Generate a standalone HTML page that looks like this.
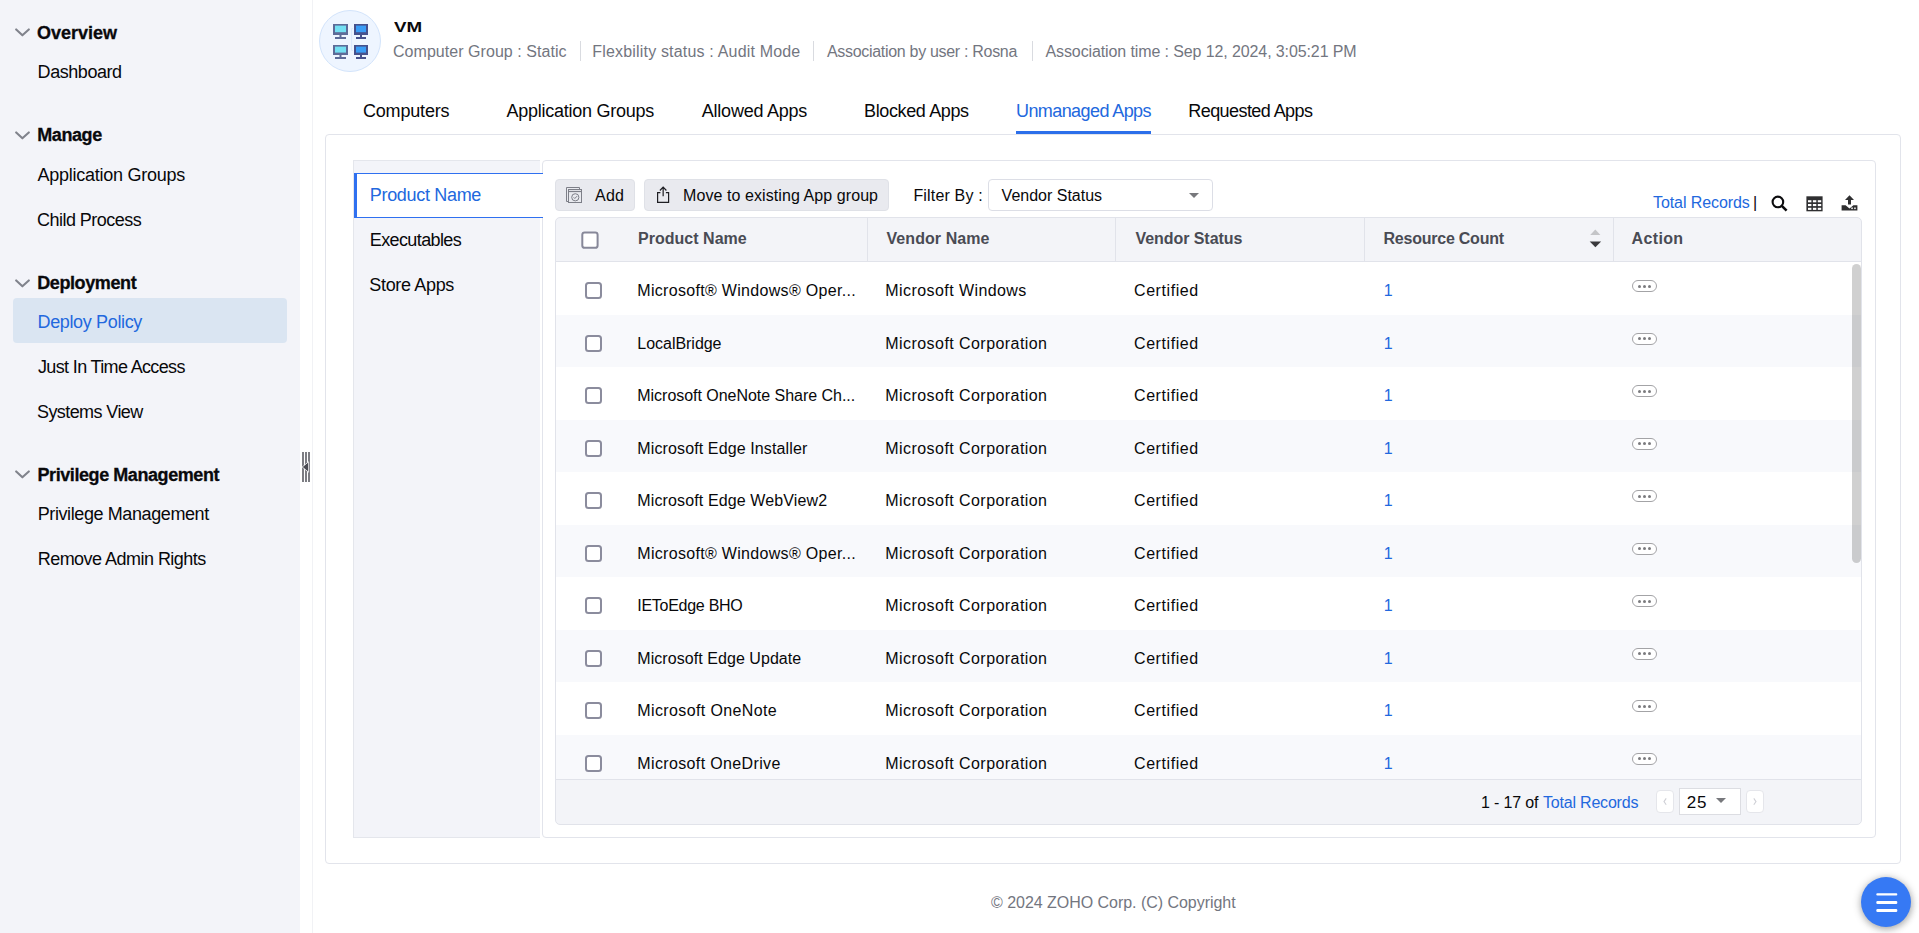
<!DOCTYPE html>
<html lang="en">
<head>
<meta charset="utf-8">
<title>Deploy Policy - Unmanaged Apps</title>
<style>
*{box-sizing:border-box;margin:0;padding:0}
html,body{width:1919px;height:933px;overflow:hidden;background:#fff}
body{position:relative;font-family:"Liberation Sans",sans-serif;color:#08080a}
.a{position:absolute}
.t{position:absolute;white-space:pre;line-height:24px;height:24px}
#side{left:0;top:0;width:300px;height:933px;background:#f3f4f9}
#sel{left:13px;top:298px;width:274px;height:45px;background:#dae5f2;border-radius:4px}
.chev{left:15px;width:15px;height:9px}
#vline{left:312px;top:0;width:1px;height:933px;background:#f1f2f5}
#avatar{left:319px;top:10px;width:62px;height:62px;border-radius:50%;background:#eef5ff;border:1px solid #d3e4fb}
.sep{top:41px;width:1.5px;height:19.5px;background:#d9dbe0}
#uline{left:1016px;top:131px;width:135px;height:3px;background:#2c6fea}
#outer{left:325px;top:134px;width:1576px;height:730px;border:1px solid #e2e4eb;border-radius:4px;background:#fff}
#lpanel{left:353px;top:160px;width:187px;height:678px;background:#f3f4f9;border:1px solid #e4e6ec;border-right:0}
#cpanel{left:542px;top:160px;width:1334px;height:678px;background:#fff;border:1px solid #e2e4eb;border-radius:4px}
#ltab{left:354px;top:173px;width:189px;height:45px;background:#fff;border-left:3px solid #2f70f0;border-top:1px solid #2f70f0;border-bottom:1px solid #2f70f0}
.btn{top:179px;height:32px;background:#e9eaef;border:1px solid #dfe1e7;border-radius:4px}
#selbox{left:988px;top:179px;width:225px;height:32px;background:#fff;border:1px solid #dcdee6;border-radius:4px}
.tri{width:0;height:0;border-left:5.3px solid transparent;border-right:5.3px solid transparent;border-top:5.6px solid #77787c}
#thead{left:555px;top:217px;width:1307px;height:45px;background:#f3f4f8;border:1px solid #e1e3ea;border-radius:5px 5px 0 0}
.csep{top:218px;width:1px;height:43px;background:#e1e3ea}
.row{position:absolute;left:556px;width:1305px;height:52.5px;background:#fff}
.row.alt{background:#f8f9fc}
.cb{position:absolute;width:17px;height:17px;border:2px solid #8b8c9d;border-radius:3.5px;background:#fff}
.pill{position:absolute;width:25px;height:12.2px;border:1.5px solid #a3a3a6;border-radius:7px;background:#fff;display:flex;align-items:center;justify-content:center;gap:1.6px}
.pill i{display:block;width:3.2px;height:3.2px;border-radius:50%;background:#7b7b7e}
#tleft{left:555px;top:261px;width:1px;height:520px;background:#e1e3ea}
#tright{left:1861px;top:261px;width:1px;height:520px;background:#e1e3ea}
#sbar{left:1852px;top:264px;width:9px;height:299px;border-radius:5px;background:rgba(0,0,0,.185)}
#tfoot{left:555px;top:779px;width:1307px;height:45.5px;background:#f3f4f8;border:1px solid #e1e3ea;border-radius:0 0 5px 5px}
.pg{top:790px;width:18px;height:23px;background:#fff;border:1px solid #e5e6eb;border-radius:4px}
#pgsel{left:1679px;top:788px;width:62px;height:27px;background:#fff;border:1px solid #dcdde2}
#fab{left:1861px;top:877px;width:50px;height:50px;border-radius:50%;background:#3679f4;box-shadow:0 1px 8px rgba(0,0,0,.3),1px 3px 6px rgba(0,0,0,.12)}
#fab b{position:absolute;left:15.3px;width:21px;height:2.3px;background:#fff;border-radius:1.2px}
</style>
</head>
<body>
<!-- ================= sidebar ================= -->
<div id="side" class="a"></div>
<div id="sel" class="a"></div>
<svg class="a chev" style="top:28px" viewBox="0 0 15 9"><path d="M1.2 1.4 L7.4 7.3 L13.8 1.4" fill="none" stroke="#80838c" stroke-width="2.1" stroke-linecap="round" stroke-linejoin="round"/></svg>
<svg class="a chev" style="top:130.5px" viewBox="0 0 15 9"><path d="M1.2 1.4 L7.4 7.3 L13.8 1.4" fill="none" stroke="#80838c" stroke-width="2.1" stroke-linecap="round" stroke-linejoin="round"/></svg>
<svg class="a chev" style="top:278.5px" viewBox="0 0 15 9"><path d="M1.2 1.4 L7.4 7.3 L13.8 1.4" fill="none" stroke="#80838c" stroke-width="2.1" stroke-linecap="round" stroke-linejoin="round"/></svg>
<svg class="a chev" style="top:470px" viewBox="0 0 15 9"><path d="M1.2 1.4 L7.4 7.3 L13.8 1.4" fill="none" stroke="#80838c" stroke-width="2.1" stroke-linecap="round" stroke-linejoin="round"/></svg>
<!-- collapse handle -->
<svg class="a" style="left:301px;top:451px" width="10" height="32" viewBox="0 0 10 32">
 <g stroke="#4c4d54" stroke-width="1.45" fill="none"><path d="M2 1V31M5 1V31M8 1V31"/></g>
 <path d="M1.2 16 L7.6 10.8 V21.2Z" fill="#4c4d54" stroke="#fff" stroke-width=".8"/>
</svg>
<div id="vline" class="a"></div>

<!-- ================= header ================= -->
<div id="avatar" class="a"></div>
<svg class="a" style="left:332px;top:23px" width="38" height="38" viewBox="0 0 38 38">
 <path d="M21 5.6H19.6V27.4H21" fill="none" stroke="#dbe8fc" stroke-width="1"/>
 <g>
  <rect x="1" y="1" width="15" height="11" fill="#5d6b98"/><rect x="3" y="2.6" width="11" height="6.6" fill="#74e0f3"/>
  <rect x="7.5" y="12" width="2" height="2.4" fill="#5d6b98"/><rect x="3" y="14" width="11" height="2" fill="#5d6b98"/>
  <rect x="22" y="1" width="14" height="11" fill="#46518c"/><rect x="24" y="2.6" width="10" height="6.6" fill="#3a9df6"/>
  <rect x="28" y="12" width="2" height="2.4" fill="#46518c"/><rect x="24" y="14" width="10" height="2" fill="#46518c"/>
  <rect x="1" y="22" width="15" height="10" fill="#5d6b98"/><rect x="3" y="23.6" width="11" height="6" fill="#74e0f3"/>
  <rect x="7.5" y="32" width="2" height="2.4" fill="#5d6b98"/><rect x="3" y="34" width="11" height="2" fill="#5d6b98"/>
  <rect x="22" y="22" width="14" height="10" fill="#46518c"/><rect x="24" y="23.6" width="10" height="6" fill="#3a9df6"/>
  <rect x="28" y="32" width="2" height="2.4" fill="#46518c"/><rect x="24" y="34" width="10" height="2" fill="#46518c"/>
 </g>
</svg>
<div class="a sep" style="left:579.5px"></div>
<div class="a sep" style="left:812.5px"></div>
<div class="a sep" style="left:1031.5px"></div>

<!-- ================= panels ================= -->
<div id="outer" class="a"></div>
<div id="uline" class="a"></div>
<div id="lpanel" class="a"></div>
<div id="cpanel" class="a"></div>
<div id="ltab" class="a"></div>

<!-- toolbar -->
<div class="a btn" style="left:555px;width:80px"></div>
<div class="a btn" style="left:644px;width:245px"></div>
<svg class="a" style="left:565px;top:186px" width="18" height="18" viewBox="0 0 18 18" fill="none" stroke="#7d7f88" stroke-width="1">
 <path d="M3.5 15.5H1.5V1.5H14.5V3.5"/>
 <rect x="3.5" y="3.5" width="13" height="13"/>
 <path d="M3.5 5.5H16.5" stroke-width="1.2"/>
 <circle cx="10.3" cy="11.3" r="3.6"/>
 <path d="M8.6 11.3 L9.8 12.5 L12.1 10.1"/>
</svg>
<svg class="a" style="left:655px;top:186px" width="16" height="18" viewBox="0 0 16 18" fill="none" stroke="#1e1e23" stroke-width="1.2">
 <path d="M5.4 6.6H2.6V16.4H13.6V6.6H10.9"/>
 <path d="M8.15 10.2V1.6M4.9 4.5L8.15 1.2L11.4 4.5"/>
</svg>
<div id="selbox" class="a"></div>
<div class="a tri" style="left:1188.5px;top:192.5px"></div>
<!-- search / columns / export icons -->
<svg class="a" style="left:1771px;top:195px" width="17" height="17" viewBox="0 0 17 17" fill="none" stroke="#0c0c0e" stroke-width="2.1">
 <circle cx="6.9" cy="6.9" r="5.3"/><path d="M10.8 10.8L15.6 15.6" stroke-width="2.6"/>
</svg>
<svg class="a" style="left:1806px;top:195.6px" width="17" height="16" viewBox="0 0 17 16">
 <rect x=".4" y=".3" width="16.2" height="15" fill="#2f2f31"/>
 <g fill="#fff">
  <rect x="2" y="4.2" width="3.4" height="2.1"/><rect x="6.9" y="4.2" width="3.4" height="2.1"/><rect x="11.8" y="4.2" width="3.4" height="2.1"/>
  <rect x="2" y="8" width="3.4" height="2.1"/><rect x="6.9" y="8" width="3.4" height="2.1"/><rect x="11.8" y="8" width="3.4" height="2.1"/>
  <rect x="2" y="11.8" width="3.4" height="2.1"/><rect x="6.9" y="11.8" width="3.4" height="2.1"/><rect x="11.8" y="11.8" width="3.4" height="2.1"/>
 </g>
</svg>
<svg class="a" style="left:1841px;top:195px" width="17" height="16" viewBox="0 0 17 16">
 <path d="M8.5 0.2 L13 5 H10 V9.4 H7 V5 H4Z" fill="#2f2f31"/>
 <path d="M.6 10.2 H4.6 L8.5 13.6 L12.4 10.2 H16.4 V15.6 H.6Z" fill="#2f2f31"/>
 <rect x="10.2" y="12.5" width="1.7" height="1.6" fill="#e6e6e6"/><rect x="13.1" y="12.5" width="1.7" height="1.6" fill="#e6e6e6"/>
</svg>

<!-- table -->
<div class="row" style="top:262px;height:53px"></div><div class="cb" style="left:585px;top:282px"></div><div class="pill" style="left:1632px;top:280.2px"><i></i><i></i><i></i></div>
<div class="row alt" style="top:315px;height:52px"></div><div class="cb" style="left:585px;top:335px"></div><div class="pill" style="left:1632px;top:332.7px"><i></i><i></i><i></i></div>
<div class="row" style="top:367px;height:53px"></div><div class="cb" style="left:585px;top:387px"></div><div class="pill" style="left:1632px;top:385.2px"><i></i><i></i><i></i></div>
<div class="row alt" style="top:420px;height:52px"></div><div class="cb" style="left:585px;top:440px"></div><div class="pill" style="left:1632px;top:437.7px"><i></i><i></i><i></i></div>
<div class="row" style="top:472px;height:53px"></div><div class="cb" style="left:585px;top:492px"></div><div class="pill" style="left:1632px;top:490.2px"><i></i><i></i><i></i></div>
<div class="row alt" style="top:525px;height:52px"></div><div class="cb" style="left:585px;top:545px"></div><div class="pill" style="left:1632px;top:542.7px"><i></i><i></i><i></i></div>
<div class="row" style="top:577px;height:53px"></div><div class="cb" style="left:585px;top:597px"></div><div class="pill" style="left:1632px;top:595.2px"><i></i><i></i><i></i></div>
<div class="row alt" style="top:630px;height:52px"></div><div class="cb" style="left:585px;top:650px"></div><div class="pill" style="left:1632px;top:647.7px"><i></i><i></i><i></i></div>
<div class="row" style="top:682px;height:53px"></div><div class="cb" style="left:585px;top:702px"></div><div class="pill" style="left:1632px;top:700.2px"><i></i><i></i><i></i></div>
<div class="row alt" style="top:735px;height:52px"></div><div class="cb" style="left:585px;top:755px"></div><div class="pill" style="left:1632px;top:752.7px"><i></i><i></i><i></i></div>

<div id="tleft" class="a"></div>
<div id="tright" class="a"></div>
<div id="sbar" class="a"></div>
<div id="thead" class="a"></div>
<div class="a csep" style="left:867px"></div>
<div class="a csep" style="left:1115px"></div>
<div class="a csep" style="left:1364px"></div>
<div class="a csep" style="left:1613px"></div>
<svg class="a" style="left:581px;top:231px" width="19" height="19" viewBox="0 0 19 19"><rect x="1.3" y="1.4" width="15.3" height="15.4" rx="2.4" fill="#fff" stroke="#878899" stroke-width="2"/></svg>
<svg class="a" style="left:1589px;top:228.5px" width="13" height="19" viewBox="0 0 13 19">
 <path d="M6.3 .4 L11.4 6.1 H1.2Z" fill="#c4c5c8"/><path d="M.7 12.4 H12.1 L6.4 18.2Z" fill="#39393c"/>
</svg>
<div id="tfoot" class="a"></div>
<div class="a pg" style="left:1656px"></div>
<div class="a pg" style="left:1746px"></div>
<svg class="a" style="left:1661px;top:796px" width="8" height="12" viewBox="0 0 8 12" fill="none" stroke="#cfd0d6" stroke-width="1.1"><path d="M5.2 2.4L3 5.6L5.2 8.8"/></svg>
<svg class="a" style="left:1751px;top:796px" width="8" height="12" viewBox="0 0 8 12" fill="none" stroke="#cfd0d6" stroke-width="1.1"><path d="M2.8 2.4L5 5.6L2.8 8.8"/></svg>
<div id="pgsel" class="a"></div>
<div class="a tri" style="left:1715.5px;top:798.2px"></div>

<!-- floating action button -->
<div id="fab" class="a"><svg width="50" height="50" viewBox="0 0 50 50" fill="#fff"><rect x="15.3" y="16.2" width="21" height="2.2" rx="1"/><rect x="15.3" y="24" width="21" height="2.9" rx="1.2"/><rect x="15.3" y="32" width="21" height="2.9" rx="1.2"/></svg></div>

<!-- ================= text ================= -->
<span class="t" style="left:37px;top:21px;font-size:18px;font-weight:700;color:#09090c;-webkit-text-stroke:.3px #09090c;">Overview</span>
<span class="t" style="left:37.6px;top:60px;font-size:18px;letter-spacing:-0.444px;">Dashboard</span>
<span class="t" style="left:37.2px;top:123px;font-size:18px;font-weight:700;color:#09090c;letter-spacing:-0.4px;-webkit-text-stroke:.3px #09090c;">Manage</span>
<span class="t" style="left:37.5px;top:163px;font-size:18px;letter-spacing:-0.258px;">Application Groups</span>
<span class="t" style="left:37px;top:208px;font-size:18px;letter-spacing:-0.528px;">Child Process</span>
<span class="t" style="left:37.2px;top:271px;font-size:18px;font-weight:700;color:#09090c;letter-spacing:-0.396px;-webkit-text-stroke:.3px #09090c;">Deployment</span>
<span class="t" style="left:37.5px;top:310px;font-size:18px;color:#2268de;letter-spacing:-0.352px;">Deploy Policy</span>
<span class="t" style="left:38px;top:355px;font-size:18px;letter-spacing:-0.646px;">Just In Time Access</span>
<span class="t" style="left:37px;top:400px;font-size:18px;letter-spacing:-0.586px;">Systems View</span>
<span class="t" style="left:37.5px;top:463px;font-size:18px;font-weight:700;color:#09090c;letter-spacing:-0.424px;-webkit-text-stroke:.3px #09090c;">Privilege Management</span>
<span class="t" style="left:37.7px;top:502px;font-size:18px;letter-spacing:-0.397px;">Privilege Management</span>
<span class="t" style="left:37.7px;top:547px;font-size:18px;letter-spacing:-0.528px;">Remove Admin Rights</span>
<span class="t" style="left:393.8px;top:15px;font-size:14.8px;font-weight:700;color:#0a0a0c;transform:scaleX(1.2667);transform-origin:0 0;">VM</span>
<span class="t" style="left:393px;top:40px;font-size:16px;color:#73767f;letter-spacing:0.045px;">Computer Group : Static</span>
<span class="t" style="left:592.3px;top:40px;font-size:16px;color:#73767f;letter-spacing:0.179px;">Flexbility status : Audit Mode</span>
<span class="t" style="left:827px;top:40px;font-size:16px;color:#73767f;letter-spacing:-0.308px;">Association by user : Rosna</span>
<span class="t" style="left:1045.5px;top:40px;font-size:16px;color:#73767f;letter-spacing:-0.109px;">Association time : Sep 12, 2024, 3:05:21 PM</span>
<span class="t" style="left:362.9px;top:99px;font-size:18px;letter-spacing:-0.167px;">Computers</span>
<span class="t" style="left:506.4px;top:99px;font-size:18px;letter-spacing:-0.242px;">Application Groups</span>
<span class="t" style="left:701.8px;top:99px;font-size:18px;letter-spacing:-0.232px;">Allowed Apps</span>
<span class="t" style="left:864px;top:99px;font-size:18px;letter-spacing:-0.364px;">Blocked Apps</span>
<span class="t" style="left:1016px;top:99px;font-size:18px;color:#2268de;letter-spacing:-0.582px;">Unmanaged Apps</span>
<span class="t" style="left:1188.3px;top:99px;font-size:18px;letter-spacing:-0.57px;">Requested Apps</span>
<span class="t" style="left:369.8px;top:183px;font-size:18px;color:#2268de;letter-spacing:-0.318px;">Product Name</span>
<span class="t" style="left:369.8px;top:228px;font-size:18px;letter-spacing:-0.612px;">Executables</span>
<span class="t" style="left:369.3px;top:273px;font-size:18px;letter-spacing:-0.333px;">Store Apps</span>
<span class="t" style="left:595px;top:184px;font-size:16px;letter-spacing:0.25px;">Add</span>
<span class="t" style="left:683.1px;top:184px;font-size:16px;letter-spacing:0.076px;">Move to existing App group</span>
<span class="t" style="left:913.4px;top:184px;font-size:16px;letter-spacing:0.166px;">Filter By :</span>
<span class="t" style="left:1001.6px;top:184px;font-size:16px;">Vendor Status</span>
<span class="t" style="left:1653px;top:191px;font-size:16px;color:#2268de;letter-spacing:-0.083px;">Total Records</span>
<span class="t" style="left:1753px;top:191px;font-size:16px;">|</span>
<span class="t" style="left:638px;top:227px;font-size:16px;font-weight:700;color:#494b54;letter-spacing:0.02px;">Product Name</span>
<span class="t" style="left:886.5px;top:227px;font-size:16px;font-weight:700;color:#494b54;letter-spacing:0.072px;">Vendor Name</span>
<span class="t" style="left:1135.4px;top:227px;font-size:16px;font-weight:700;color:#494b54;letter-spacing:-0.047px;">Vendor Status</span>
<span class="t" style="left:1383.5px;top:227px;font-size:16px;font-weight:700;color:#494b54;letter-spacing:-0.231px;">Resource Count</span>
<span class="t" style="left:1631.6px;top:227px;font-size:16px;font-weight:700;color:#494b54;letter-spacing:0.344px;">Action</span>
<span class="t" style="left:1481px;top:791px;font-size:16px;letter-spacing:-0.145px;">1 - 17 of</span>
<span class="t" style="left:1543px;top:791px;font-size:16px;color:#2268de;letter-spacing:-0.2px;">Total Records</span>
<span class="t" style="left:1686.8px;top:791px;font-size:17px;letter-spacing:0.66px;">25</span>
<span class="t" style="left:991px;top:891px;font-size:16px;color:#73767f;letter-spacing:-0.033px;">© 2024 ZOHO Corp. (C) Copyright</span>
<span class="t" style="left:637.3px;top:279px;font-size:16px;letter-spacing:0.31px;">Microsoft® Windows® Oper...</span>
<span class="t" style="left:885.3px;top:279px;font-size:16px;letter-spacing:0.425px;">Microsoft Windows</span>
<span class="t" style="left:1134px;top:279px;font-size:16px;letter-spacing:0.571px;">Certified</span>
<span class="t" style="left:1383.7px;top:279px;font-size:16px;color:#2268de;">1</span>
<span class="t" style="left:637.3px;top:332px;font-size:16px;letter-spacing:-0.028px;">LocalBridge</span>
<span class="t" style="left:885.3px;top:332px;font-size:16px;letter-spacing:0.439px;">Microsoft Corporation</span>
<span class="t" style="left:1134px;top:332px;font-size:16px;letter-spacing:0.571px;">Certified</span>
<span class="t" style="left:1383.7px;top:332px;font-size:16px;color:#2268de;">1</span>
<span class="t" style="left:637.3px;top:384px;font-size:16px;letter-spacing:-0.031px;">Microsoft OneNote Share Ch...</span>
<span class="t" style="left:885.3px;top:384px;font-size:16px;letter-spacing:0.439px;">Microsoft Corporation</span>
<span class="t" style="left:1134px;top:384px;font-size:16px;letter-spacing:0.571px;">Certified</span>
<span class="t" style="left:1383.7px;top:384px;font-size:16px;color:#2268de;">1</span>
<span class="t" style="left:637.3px;top:437px;font-size:16px;letter-spacing:0.12px;">Microsoft Edge Installer</span>
<span class="t" style="left:885.3px;top:437px;font-size:16px;letter-spacing:0.439px;">Microsoft Corporation</span>
<span class="t" style="left:1134px;top:437px;font-size:16px;letter-spacing:0.571px;">Certified</span>
<span class="t" style="left:1383.7px;top:437px;font-size:16px;color:#2268de;">1</span>
<span class="t" style="left:637.3px;top:489px;font-size:16px;letter-spacing:0.127px;">Microsoft Edge WebView2</span>
<span class="t" style="left:885.3px;top:489px;font-size:16px;letter-spacing:0.439px;">Microsoft Corporation</span>
<span class="t" style="left:1134px;top:489px;font-size:16px;letter-spacing:0.571px;">Certified</span>
<span class="t" style="left:1383.7px;top:489px;font-size:16px;color:#2268de;">1</span>
<span class="t" style="left:637.3px;top:542px;font-size:16px;letter-spacing:0.31px;">Microsoft® Windows® Oper...</span>
<span class="t" style="left:885.3px;top:542px;font-size:16px;letter-spacing:0.439px;">Microsoft Corporation</span>
<span class="t" style="left:1134px;top:542px;font-size:16px;letter-spacing:0.571px;">Certified</span>
<span class="t" style="left:1383.7px;top:542px;font-size:16px;color:#2268de;">1</span>
<span class="t" style="left:637.3px;top:594px;font-size:16px;letter-spacing:-0.273px;">IEToEdge BHO</span>
<span class="t" style="left:885.3px;top:594px;font-size:16px;letter-spacing:0.439px;">Microsoft Corporation</span>
<span class="t" style="left:1134px;top:594px;font-size:16px;letter-spacing:0.571px;">Certified</span>
<span class="t" style="left:1383.7px;top:594px;font-size:16px;color:#2268de;">1</span>
<span class="t" style="left:637.3px;top:647px;font-size:16px;letter-spacing:0.059px;">Microsoft Edge Update</span>
<span class="t" style="left:885.3px;top:647px;font-size:16px;letter-spacing:0.439px;">Microsoft Corporation</span>
<span class="t" style="left:1134px;top:647px;font-size:16px;letter-spacing:0.571px;">Certified</span>
<span class="t" style="left:1383.7px;top:647px;font-size:16px;color:#2268de;">1</span>
<span class="t" style="left:637.3px;top:699px;font-size:16px;letter-spacing:0.375px;">Microsoft OneNote</span>
<span class="t" style="left:885.3px;top:699px;font-size:16px;letter-spacing:0.439px;">Microsoft Corporation</span>
<span class="t" style="left:1134px;top:699px;font-size:16px;letter-spacing:0.571px;">Certified</span>
<span class="t" style="left:1383.7px;top:699px;font-size:16px;color:#2268de;">1</span>
<span class="t" style="left:637.3px;top:752px;font-size:16px;letter-spacing:0.362px;">Microsoft OneDrive</span>
<span class="t" style="left:885.3px;top:752px;font-size:16px;letter-spacing:0.439px;">Microsoft Corporation</span>
<span class="t" style="left:1134px;top:752px;font-size:16px;letter-spacing:0.571px;">Certified</span>
<span class="t" style="left:1383.7px;top:752px;font-size:16px;color:#2268de;">1</span>
</body>
</html>
